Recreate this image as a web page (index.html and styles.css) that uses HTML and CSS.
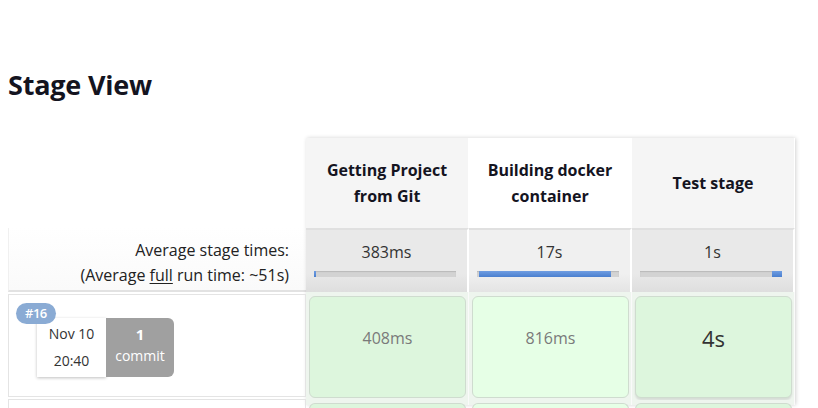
FILE: index.html
```html
<!DOCTYPE html>
<html lang="en">
<head>
<meta charset="utf-8">
<title>Stage View</title>
<link rel="stylesheet" href="styles.css">
</head>
<body>
<div class="page">
  <h2 class="title">Stage View</h2>
  <div class="stage-view">
    <div class="left-col">
      <div class="lc-head"></div>
      <div class="lc-avg">
        <div>Average stage times:</div>
        <div>(Average <u>full</u> run time: ~51s)</div>
      </div>
      <div class="lc-build">
        <span class="badge">#16</span>
        <div class="build-info">
          <div class="date"><div>Nov 10</div><div>20:40</div></div>
          <div class="commit"><div class="num">1</div><div>commit</div></div>
        </div>
      </div>
      <div class="lc-build next"></div>
    </div>
    <div class="stages">
      <div class="head">Getting Project<br>from Git</div>
      <div class="head hover">Building docker<br>container</div>
      <div class="head">Test stage</div>

      <div class="avg">
        <div class="time">383ms</div>
        <div class="track"><span class="fill" style="left:0;width:2px"></span></div>
      </div>
      <div class="avg hover">
        <div class="time">17s</div>
        <div class="track"><span class="fill" style="left:2px;width:132px"></span></div>
      </div>
      <div class="avg">
        <div class="time">1s</div>
        <div class="track"><span class="fill" style="left:132px;width:10px"></span></div>
      </div>

      <div class="cellwrap"><div class="cell">408ms</div></div>
      <div class="cellwrap"><div class="cell light">816ms</div></div>
      <div class="cellwrap"><div class="cell big">4s</div></div>

      <div class="cellwrap next"><div class="cell"></div></div>
      <div class="cellwrap next"><div class="cell light"></div></div>
      <div class="cellwrap next"><div class="cell"></div></div>
    </div>
  </div>
</div>
</body>
</html>
```
FILE: styles.css
```css
* { box-sizing: border-box; }
html, body { margin: 0; padding: 0; background: #fff; overflow: hidden; }
body {
  font-family: "Open Sans", "Noto Sans", "Liberation Sans", sans-serif;
  color: #14141f;
  height: 408px;
}
.page { padding: 0 8px; }
.title {
  margin: 0;
  padding-top: 66px;
  height: 138px;
  font-size: 27px;
  font-weight: 700;
  line-height: 38px;
  letter-spacing: -0.2px;
}
.stage-view { display: flex; align-items: flex-start; }
.left-col { width: 298px; display: flex; flex-direction: column; }
.lc-head { height: 90px; }
.lc-avg {
  height: 64px;
  text-align: right;
  padding: 10px 17px 0 0;
  font-size: 16px;
  line-height: 25px;
  color: #222;
  border-left: 1px solid #f0f0f0;
  border-bottom: 2px solid #e2e2e2;
  background: linear-gradient(#fff, #fafafa);
}
.lc-avg u { text-decoration-thickness: 1px; text-underline-offset: 2px; }
.lc-build {
  position: relative;
  margin-top: 2px;
  height: 103px;
  border: 1px solid #e4e4e4;
  padding: 23px 0 0 28px;
}
.lc-build.next { margin-top: 2px; height: 5px; border-bottom: 0; }
.badge {
  position: absolute;
  left: 7px;
  top: 8px;
  background: #8aabd4;
  color: #fff;
  font-size: 13px;
  font-weight: 600;
  line-height: 21px;
  padding: 0 9px;
  border-radius: 11px;
  letter-spacing: -0.5px;
}
.build-info { display: flex; }
.date {
  width: 69px;
  height: 59px;
  background: #fff;
  box-shadow: 0 1px 3px rgba(0,0,0,0.25);
  text-align: center;
  font-size: 14px;
  color: #333;
  line-height: 27px;
  padding-top: 2px;
}
.commit {
  width: 68px;
  height: 59px;
  background: #a0a0a0;
  color: #fff;
  border-radius: 0 6px 6px 0;
  text-align: center;
  font-size: 14px;
  line-height: 21px;
  padding-top: 6px;
}
.commit .num { font-weight: 700; font-size: 15px; }

.stages {
  width: 489px;
  display: grid;
  grid-template-columns: repeat(3, 163px);
  grid-template-rows: 90px 64px 108px 5px;
  box-shadow: 1px 0 4px rgba(0,0,0,0.18);
  background: #f3f6f3;
}
.head {
  display: flex;
  align-items: center;
  justify-content: center;
  text-align: center;
  background: #f5f5f5;
  font-weight: 700;
  font-size: 16px;
  line-height: 26px;
  border-right: 1px solid #fff;
}
.head.hover { background: #fff; }
.avg {
  background: linear-gradient(#e9e9e9 70%, #dedede);
  border-top: 2px solid #e0e0e0;
  border-right: 2px solid #fff;
  padding: 9px 0 0 8px;
}
.avg.hover { background: linear-gradient(#f0f0f0 70%, #e4e4e4); }
.avg .time {
  text-align: center;
  padding-right: 8px;
  font-size: 16px;
  line-height: 26px;
  color: #333;
}
.track {
  position: relative;
  margin-top: 6px;
  width: 142px;
  height: 6px;
  background: #d3d3d3;
  box-shadow: inset 0 1px 1px rgba(0,0,0,0.12);
}
.fill {
  position: absolute;
  top: 0;
  height: 6px;
  background: linear-gradient(#6f9de2, #4a7fcf);
}
.cellwrap {
  padding: 4px 2px 2px 3px;
  background: #eef5ee;
  border-right: 1px solid #fafafa;
}
.cellwrap.next { padding-top: 3px; padding-bottom: 0; }
.cell {
  height: 100%;
  background: #ddf6dd;
  border: 1px solid #cfdccf;
  border-radius: 6px;
  text-align: center;
  color: #7a7a7a;
  font-size: 16px;
  padding-top: 30px;
}
.cellwrap.next .cell { border-bottom: 0; border-radius: 6px 6px 0 0; }
.cell.light { background: #e6ffe6; }
.cell.big {
  font-size: 22px;
  color: #333;
  padding-top: 26px;
  box-shadow: 0 2px 2px rgba(0,0,0,0.1);
}
```
